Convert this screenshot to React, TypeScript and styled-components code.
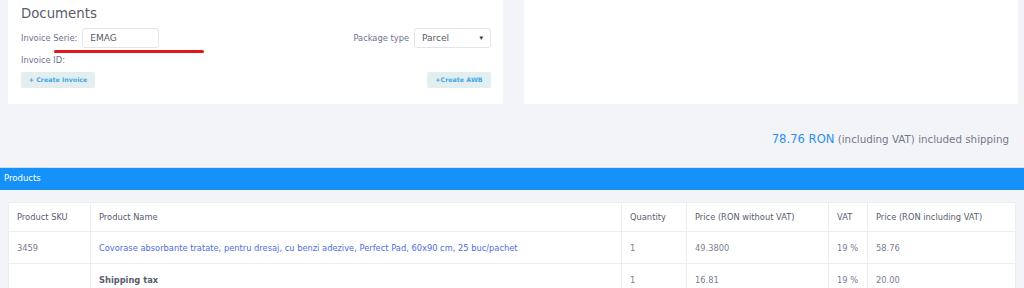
import React from 'react'
import styled, { createGlobalStyle } from 'styled-components'

const GlobalStyle = createGlobalStyle`
	html, body {
		margin: 0;
		padding: 0;
		background: #f3f4f7;
		font-family: 'DejaVu Sans', 'Open Sans', sans-serif;
	}
`

interface IRow {
	sku: string
	name: string
	link?: boolean
	qty: string
	price: string
	vat: string
	total: string
}

const rows: IRow[] = [
	{
		sku: '3459',
		name: 'Covorase absorbante tratate, pentru dresaj, cu benzi adezive, Perfect Pad, 60x90 cm, 25 buc/pachet',
		link: true,
		qty: '1',
		price: '49.3800',
		vat: '19 %',
		total: '58.76',
	},
	{ sku: '', name: 'Shipping tax', qty: '1', price: '16.81', vat: '19 %', total: '20.00' },
]

export default function App() {
	return (
		<Page>
			<GlobalStyle />
			<TopRow>
				<Card>
					<Title>Documents</Title>
					<FormRow>
						<Field>
							<Label>Invoice Serie:</Label>
							<Input>EMAG</Input>
						</Field>
						<Field>
							<Label>Package type</Label>
							<Select>
								<span>Parcel</span>
								<Caret>▾</Caret>
							</Select>
						</Field>
					</FormRow>
					<Mark />
					<Label>Invoice ID:</Label>
					<ButtonRow>
						<SmallButton $w={74}>+ Create Invoice</SmallButton>
						<SmallButton $w={64}>+Create AWB</SmallButton>
					</ButtonRow>
				</Card>
				<Card />
			</TopRow>
			<Total>
				<Amount>78.76 RON</Amount> (including VAT) included shipping
			</Total>
			<PanelHead>Products</PanelHead>
			<TableWrap>
				<Table>
					<colgroup>
						<col style={{ width: 82 }} />
						<col style={{ width: 531 }} />
						<col style={{ width: 65 }} />
						<col style={{ width: 142 }} />
						<col style={{ width: 39 }} />
						<col />
					</colgroup>
					<thead>
						<tr>
							<Th>Product SKU</Th>
							<Th>Product Name</Th>
							<Th>Quantity</Th>
							<Th>Price (RON without VAT)</Th>
							<Th>VAT</Th>
							<Th>Price (RON including VAT)</Th>
						</tr>
					</thead>
					<tbody>
						{rows.map((r, i) => (
							<tr key={i}>
								<Td>{r.sku}</Td>
								<Td>{r.link ? <NameLink>{r.name}</NameLink> : <Strong>{r.name}</Strong>}</Td>
								<Td>{r.qty}</Td>
								<Td>{r.price}</Td>
								<Td>{r.vat}</Td>
								<Td>{r.total}</Td>
							</tr>
						))}
					</tbody>
				</Table>
			</TableWrap>
		</Page>
	)
}

const Page = styled.div`
	width: 1024px;
	height: 288px;
	overflow: hidden;
`

const TopRow = styled.div`
	display: grid;
	grid-template-columns: 495px 494px;
	gap: 21px;
	padding-left: 8px;
`

const Card = styled.div`
	position: relative;
	height: 104px;
	background: #ffffff;
	padding: 5px 12px 0 13px;
	box-sizing: border-box;
`

const Title = styled.h3`
	margin: 0;
	font-size: 13.3px;
	line-height: 17px;
	font-weight: normal;
	color: #595d6e;
`

const FormRow = styled.div`
	display: flex;
	justify-content: space-between;
	align-items: center;
	margin-top: 6px;
`

const Field = styled.div`
	display: flex;
	align-items: center;
	gap: 5px;
`

const Label = styled.span`
	font-size: 8.3px;
	line-height: 18px;
	color: #6e7191;
`

const Input = styled.div`
	width: 77px;
	height: 20px;
	box-sizing: border-box;
	border: 1px solid #e2e5ec;
	border-radius: 3px;
	padding: 0 7px;
	font-size: 9px;
	line-height: 18px;
	color: #575962;
`

const Select = styled(Input)`
	display: flex;
	justify-content: space-between;
`

const Caret = styled.span`
	font-size: 7px;
	color: #333;
`

const Mark = styled.div`
	position: absolute;
	left: 46px;
	top: 50px;
	width: 150px;
	height: 3px;
	border-radius: 2px;
	background: #e8141c;
`

const ButtonRow = styled.div`
	display: flex;
	justify-content: space-between;
	margin-top: 3px;
`

const SmallButton = styled.div<{ $w: number }>`
	width: ${(p) => p.$w}px;
	height: 16px;
	border-radius: 2px;
	background: #e3eef1;
	color: #45a8e6;
	font-size: 6.3px;
	font-weight: bold;
	line-height: 16px;
	text-align: center;
	white-space: nowrap;
`

const Total = styled.div`
	height: 63px;
	box-sizing: border-box;
	padding: 28px 15px 0 0;
	text-align: right;
	font-size: 10.3px;
	color: #74788d;
`

const Amount = styled.span`
	font-size: 11.6px;
	color: #2f8ff0;
`

const PanelHead = styled.div`
	height: 23px;
	box-sizing: border-box;
	border-top: 1px solid #cfe0ef;
	background: #1592fa;
	color: #ffffff;
	font-size: 8.5px;
	line-height: 21px;
	padding-left: 4px;
`

const TableWrap = styled.div`
	padding: 12px 8px 0 8px;
`

const Table = styled.table`
	width: 1008px;
	border-collapse: collapse;
	table-layout: fixed;
	background: #ffffff;
`

const Th = styled.th`
	height: 28px;
	border: 1px solid #ebedf2;
	padding: 0 8px;
	text-align: left;
	font-weight: normal;
	font-size: 8.3px;
	color: #595d6e;
`

const Td = styled.td`
	height: 31px;
	border: 1px solid #ebedf2;
	padding: 0 8px;
	font-size: 8.3px;
	color: #7a7d92;
	white-space: nowrap;
`

const NameLink = styled.span`
	color: #4e6ee0;
`

const Strong = styled.span`
	font-weight: bold;
	color: #595d6e;
`
